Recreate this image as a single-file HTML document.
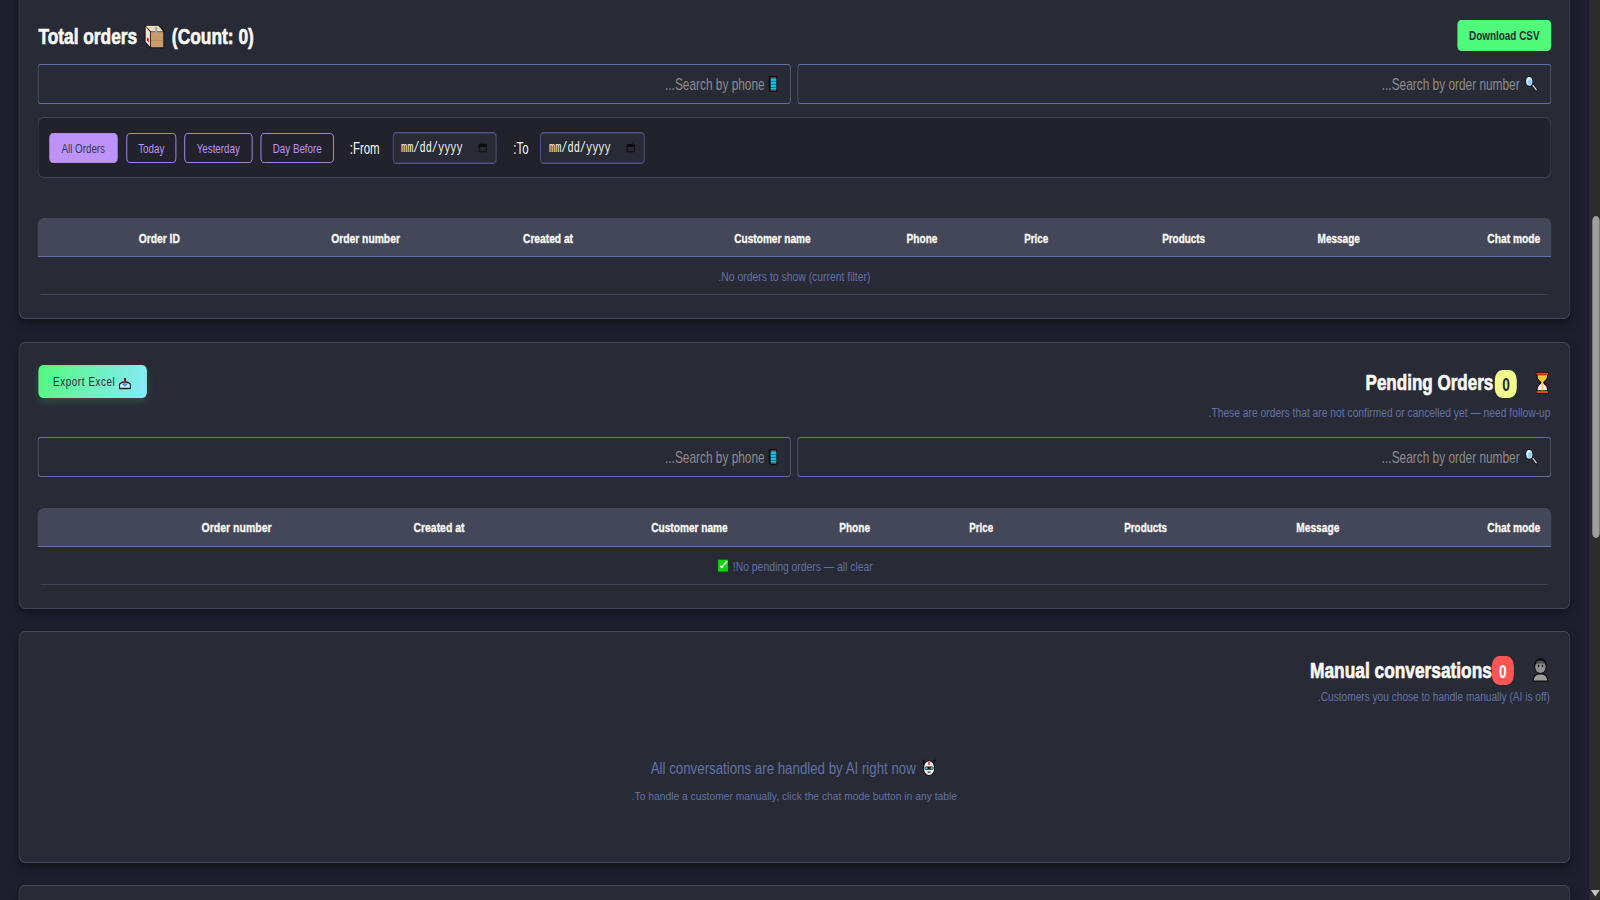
<!DOCTYPE html>
<html lang="en" dir="rtl">
<head>
<meta charset="utf-8">
<title>Orders dashboard</title>
<style>
html,body{margin:0;padding:0;overflow:hidden;}
body{width:1600px;height:900px;overflow:hidden;background:#1e1e2e;font-family:"Liberation Sans",Arial,sans-serif;color:#f8f8f2;}
#stage{position:absolute;left:0;top:0;width:2181.82px;height:900px;transform-origin:0 0;transform:scaleX(0.73333);direction:rtl;overflow:hidden;}
.card{position:absolute;box-sizing:border-box;margin:0;background:#282a36;border-radius:8.5px;box-shadow:inset 0 0 0 1px #44475a,0 5px 12px -3px rgba(0,0,0,.55);}
.t{position:absolute;display:block;margin:0;white-space:nowrap;line-height:20px;height:20px;direction:rtl;font-weight:400;}
.b{font-weight:700;-webkit-text-stroke:.35px currentColor;} .hd .b{-webkit-text-stroke:.65px currentColor;} .sb{font-weight:700;}
h2.hd{margin:0;font-size:22px;position:static;}
.ic{position:absolute;display:block;overflow:visible;}
button{position:absolute;box-sizing:border-box;margin:0;padding:0;border:0;font-family:inherit;cursor:pointer;}
.btn-green{background:#50fa7b;border-radius:5px;color:#282a36;}
.btn-grad{background:linear-gradient(120deg,#50fa7b 0%,#8be9fd 100%);border-radius:6px;color:#282a36;box-shadow:0 4px 10px rgba(80,250,123,.18);font-size:13.33px;}
.bl{position:absolute;line-height:20px;white-space:nowrap;direction:ltr;letter-spacing:.85px;}
.srch{position:absolute;box-sizing:border-box;box-shadow:inset 0 0 0 1px #6272a4;border-radius:4px;background:#282a36;}
.srch input{position:absolute;left:0;top:0;width:100%;height:100%;box-sizing:border-box;margin:0;border:0;outline:0;background:transparent;color:#f8f8f2;font:16.2px "Liberation Sans",Arial,sans-serif;direction:rtl;padding-left:12px;}
.srch input::placeholder{color:#8d8d8d;opacity:1;}
.fbar{position:absolute;box-sizing:border-box;background:#21222c;box-shadow:inset 0 0 0 1px #414355;border-radius:8px;}
.fbtn{background:transparent;border:1.5px solid #bd93f9;border-radius:5px;color:#bd93f9;font-size:13.33px;line-height:27px;text-align:center;}
.fbtn.on{background:#bd93f9;color:#3a3550;}
.lbl{position:absolute;font-size:15.6px;line-height:20px;white-space:nowrap;color:#f8f8f2;direction:rtl;}
.date{position:absolute;box-sizing:border-box;background:#282a36;box-shadow:inset 0 0 0 1.4px #4d5588;border-radius:5px;}
.mono{position:absolute;left:12px;top:7px;font:14px/18px "Liberation Mono","Courier New",monospace;color:#f8f8f2;direction:ltr;white-space:nowrap;}
.tbl{position:absolute;}
.thead{position:absolute;left:0;right:0;top:0;background:#44475a;border-bottom:1.5px solid #6272a4;border-radius:8px 8px 0 0;}
.th{position:static;}
.trow{position:absolute;left:4px;right:5px;border-bottom:1px solid #414458;}
.badge{position:absolute;border-radius:10px;}
.badge.y{background:#f1fa8c;} .badge.r{background:#ff5555;}
.bt{position:absolute;left:0;right:0;top:50%;margin-top:-8.6px;text-align:center;font:700 18px/20px "Liberation Sans",Arial,sans-serif;transform:scaleX(1.04);}
.sbar{position:absolute;background:#2c2c2c;direction:ltr;}
.thumb{position:absolute;background:#9f9f9f;border-radius:5px;}
</style>
</head>
<body>
<div id="stage">
<main>
<section class="card " style="left:24.55px;top:-24.0px;width:2116.36px;height:343.0px;"><h2 class="hd"><span id="t_total" class="t b" style="font-size:21.2px;top:51.2px;left:27.55px;width:1000px;text-align:left;transform-origin:0 50%;transform:scaleX(1.1146);">Total orders</span><svg class="ic" style="left:172.09px;top:49.0px;width:26.59px;height:23.2px;" viewBox="0 0 20 24" preserveAspectRatio="none"><path d="M0 0 H14.5 L20 6 V24 H5.7 L0 17.7 Z" fill="#0b0a09"/><path d="M6.3 7.3 H19.1 V23.1 H6.3 Z" fill="#c99b6c"/><path d="M6.3 15.6 H19.1 V16.4 H6.3 Z" fill="#b08356"/><path d="M0.9 0.9 H14.1 L19.1 6.6 H6.3 Z" fill="#f1dcc0"/><path d="M0.9 1.6 L5.5 7.3 V22.5 L0.9 17.3 Z" fill="#f4e3cf"/><path d="M10.4 2.2 H12.6 L13.4 8.8 H11.2 Z" fill="#9aa6b3"/><path d="M2.2 12.4 L4.3 14.6 V18 L2.2 15.8 Z" fill="#ee1c2e"/></svg><span id="t_count" class="t b" style="font-size:21.2px;top:51.2px;left:209.32px;width:1000px;text-align:left;transform-origin:0 50%;transform:scaleX(1.1177);">(Count: 0)</span></h2><button class="btn-green" style="left:1962.27px;top:44.0px;width:128.18px;height:31.0px;"><span id="t_csv" class="t sb" style="font-size:12.7px;top:5.8px;left:-436.25px;width:1000px;text-align:center;transform-origin:50% 50%;transform:scaleX(1.0654);color:#282a36;">Download CSV</span></button><div class="srch" style="left:1062.27px;top:88.0px;width:1028.05px;height:40.0px;"><input type="text" placeholder="Search by order number..." style="padding-right:42.95px"><svg class="ic" style="left:991.77px;top:12.2px;width:17.05px;height:15.0px;" viewBox="0 0 17 15" preserveAspectRatio="none"><path d="M10.6 9.1 L15.6 13.8" stroke="#0d1116" stroke-width="3.6" stroke-linecap="round"/><path d="M11 9.5 L15.4 13.6" stroke="#cfd8d2" stroke-width="1.7" stroke-linecap="round"/><circle cx="6" cy="5.4" r="5.3" fill="#0d1116"/><circle cx="6" cy="5.4" r="4.3" fill="#bfe6fb"/><circle cx="6.6" cy="6" r="2.6" fill="#8fd0f7"/><path d="M3 5 A3.2 3.2 0 0 1 6 2.2" stroke="#fff" stroke-width="1.3" fill="none" stroke-linecap="round"/></svg></div><div class="srch" style="left:26.59px;top:88.0px;width:1026.82px;height:40.0px;"><input type="text" placeholder="Search by phone..." style="padding-right:35.59px"><svg class="ic" style="left:997.09px;top:12.0px;width:11.32px;height:15.8px;" viewBox="0 0 11.4 15.8" preserveAspectRatio="none"><rect x="0" y="0" width="11.4" height="15.8" rx="1.6" fill="#0c0a0a"/><rect x="2.6" y="2.3" width="7.7" height="11.4" fill="#12c4ef"/><rect x="2.6" y="4.9" width="7.7" height="0.9" fill="#0a5f86"/><rect x="2.6" y="7.9" width="7.7" height="0.9" fill="#0a5f86"/><rect x="2.6" y="10.9" width="7.7" height="0.9" fill="#0a5f86"/><rect x="2.6" y="13.7" width="7.7" height="1" fill="#8a5a3a"/><rect x="2.6" y="1.3" width="7.7" height="1" fill="#8a5a3a"/></svg></div><div class="fbar" style="left:26.73px;top:141.0px;width:2063.73px;height:60.6px;"><button class="fbtn on" style="left:15.55px;top:16.0px;width:92.73px;height:30.0px;">All Orders</button><button class="fbtn" style="left:120.55px;top:16.0px;width:68.18px;height:30.0px;">Today</button><button class="fbtn" style="left:199.64px;top:16.0px;width:92.73px;height:30.0px;">Yesterday</button><button class="fbtn" style="left:303.27px;top:16.0px;width:100.91px;height:30.0px;">Day Before</button><label class="lbl" style="left:425.32px;top:21.5px;">From:</label><div class="date" style="left:483.27px;top:14.5px;width:142.50px;height:32.5px;"><span class="mono">mm/dd/yyyy</span><svg class="ic" style="left:117.27px;top:11.5px;width:11.59px;height:9.5px;" viewBox="0 0 14 14.5" preserveAspectRatio="none"><rect x="1" y="2.5" width="12" height="11" rx="1.6" fill="none" stroke="#0c0c0f" stroke-width="1.6"/><rect x="1" y="2.5" width="12" height="3.6" fill="#0c0c0f"/><rect x="3.4" y="0.6" width="1.7" height="3" fill="#0c0c0f"/><rect x="8.9" y="0.6" width="1.7" height="3" fill="#0c0c0f"/></svg></div><label class="lbl" style="left:648.27px;top:21.5px;">To:</label><div class="date" style="left:685.09px;top:14.5px;width:142.50px;height:32.5px;"><span class="mono">mm/dd/yyyy</span><svg class="ic" style="left:117.27px;top:11.5px;width:11.59px;height:9.5px;" viewBox="0 0 14 14.5" preserveAspectRatio="none"><rect x="1" y="2.5" width="12" height="11" rx="1.6" fill="none" stroke="#0c0c0f" stroke-width="1.6"/><rect x="1" y="2.5" width="12" height="3.6" fill="#0c0c0f"/><rect x="3.4" y="0.6" width="1.7" height="3" fill="#0c0c0f"/><rect x="8.9" y="0.6" width="1.7" height="3" fill="#0c0c0f"/></svg></div></div><div class="tbl" role="table" style="left:26.73px;top:242.0px;width:2063.73px;height:76.8px;"><div class="thead" role="row" style="height:37.5px"><div class="th" role="columnheader"><span id="t1_h0" class="t b" style="font-size:12.8px;top:11.0px;left:-805.82px;width:1000px;text-align:right;transform-origin:100% 50%;transform:scaleX(1.0999);">Order ID</span></div><div class="th" role="columnheader"><span id="t1_h1" class="t b" style="font-size:12.8px;top:11.0px;left:-506.50px;width:1000px;text-align:right;transform-origin:100% 50%;transform:scaleX(1.0993);">Order number</span></div><div class="th" role="columnheader"><span id="t1_h2" class="t b" style="font-size:12.8px;top:11.0px;left:-269.91px;width:1000px;text-align:right;transform-origin:100% 50%;transform:scaleX(1.0893);">Created at</span></div><div class="th" role="columnheader"><span id="t1_h3" class="t b" style="font-size:12.8px;top:11.0px;left:53.27px;width:1000px;text-align:right;transform-origin:100% 50%;transform:scaleX(1.0758);">Customer name</span></div><div class="th" role="columnheader"><span id="t1_h4" class="t b" style="font-size:12.8px;top:11.0px;left:227.14px;width:1000px;text-align:right;transform-origin:100% 50%;transform:scaleX(1.0774);">Phone</span></div><div class="th" role="columnheader"><span id="t1_h5" class="t b" style="font-size:12.8px;top:11.0px;left:378.23px;width:1000px;text-align:right;transform-origin:100% 50%;transform:scaleX(1.0452);">Price</span></div><div class="th" role="columnheader"><span id="t1_h6" class="t b" style="font-size:12.8px;top:11.0px;left:591.91px;width:1000px;text-align:right;transform-origin:100% 50%;transform:scaleX(1.0571);">Products</span></div><div class="th" role="columnheader"><span id="t1_h7" class="t b" style="font-size:12.8px;top:11.0px;left:802.59px;width:1000px;text-align:right;transform-origin:100% 50%;transform:scaleX(1.0670);">Message</span></div><div class="th" role="columnheader"><span id="t1_h8" class="t b" style="font-size:12.8px;top:11.0px;left:1048.73px;width:1000px;text-align:right;transform-origin:100% 50%;transform:scaleX(1.0930);">Chat mode</span></div></div><div class="trow" role="row" style="top:39px;height:36.80000000000001px;"><span id="t_empty1" class="t " style="font-size:12px;top:9.7px;left:527.45px;width:1000px;text-align:center;transform-origin:50% 50%;transform:scaleX(1.1817);color:#6272a4;">No orders to show (current filter).</span></div></div></section>
<section class="card " style="left:24.55px;top:342.0px;width:2116.36px;height:267.0px;"><button class="btn-grad" style="left:27.27px;top:23.0px;width:148.64px;height:33.0px;"><span class="bl" style="left:20.18px;top:6.699999999999989px;">Export Excel</span><svg class="ic" style="left:110.45px;top:12.9px;width:16.09px;height:11.2px;" viewBox="0 0 16 11.2" preserveAspectRatio="none"><rect x="6.9" y="0" width="2.4" height="4.6" fill="#5c0a14"/><path d="M0.7 10.5 V6.2 L4.6 4.2 H11.4 L15.3 6.2 V10.5 Z" fill="#dbeafb" stroke="#15222c" stroke-width="1.4" stroke-linejoin="round"/><path d="M3.4 5.6 H12.6 L8 8.8 Z" fill="#3a92e4"/><path d="M5.7 3.4 H10.5 L8.1 6 Z" fill="#f2142c"/></svg></button><h2 class="hd"><svg class="ic" style="left:2069.18px;top:30.3px;width:17.59px;height:21.7px;" viewBox="0 0 18 22" preserveAspectRatio="none"><path d="M0 0 H18 V3.4 H17 C17.3 9 12.3 9 12.2 11 C12.3 13 17.3 13 17 18.6 H18 V22 H0 V18.6 H1 C0.7 13 5.7 13 5.8 11 C5.7 9 0.7 9 1 3.4 H0 Z" fill="#0a0908"/><rect x="0.9" y="0.8" width="16.2" height="2" rx=".5" fill="#f0401c"/><rect x="0.9" y="19.2" width="16.2" height="2" rx=".5" fill="#f0401c"/><path d="M2.4 3.4 H15.6 C15.9 8.4 10.8 8.6 10.3 11 H7.7 C7.2 8.6 2.1 8.4 2.4 3.4 Z" fill="#f8c832"/><path d="M7.7 11 H10.3 C10.8 13.4 15.9 13.6 15.6 18.6 H2.4 C2.1 13.6 7.2 13.4 7.7 11 Z" fill="#f5f1f6"/><rect x="8.2" y="10.6" width="1.6" height="8" fill="#f8c832"/></svg><span id="t_pend" class="t b" style="font-size:21.2px;top:31.4px;left:1011.36px;width:1000px;text-align:right;transform-origin:100% 50%;transform:scaleX(1.0965);">Pending Orders</span><span class="badge y" style="left:2013.14px;top:27.8px;width:30.82px;height:28.0px;"><span class="bt" style="color:#282a36">0</span></span></h2><p id="t_pend_sub" class="t " style="font-size:12.5px;top:60.5px;left:1089.09px;width:1000px;text-align:right;transform-origin:100% 50%;transform:scaleX(1.1224);color:#6272a4;">These are orders that are not confirmed or cancelled yet — need follow-up.</p><div class="srch" style="left:1062.27px;top:95.0px;width:1028.05px;height:40.0px;"><input type="text" placeholder="Search by order number..." style="padding-right:42.95px"><svg class="ic" style="left:991.77px;top:12.2px;width:17.05px;height:15.0px;" viewBox="0 0 17 15" preserveAspectRatio="none"><path d="M10.6 9.1 L15.6 13.8" stroke="#0d1116" stroke-width="3.6" stroke-linecap="round"/><path d="M11 9.5 L15.4 13.6" stroke="#cfd8d2" stroke-width="1.7" stroke-linecap="round"/><circle cx="6" cy="5.4" r="5.3" fill="#0d1116"/><circle cx="6" cy="5.4" r="4.3" fill="#bfe6fb"/><circle cx="6.6" cy="6" r="2.6" fill="#8fd0f7"/><path d="M3 5 A3.2 3.2 0 0 1 6 2.2" stroke="#fff" stroke-width="1.3" fill="none" stroke-linecap="round"/></svg></div><div class="srch" style="left:26.59px;top:95.0px;width:1026.82px;height:40.0px;"><input type="text" placeholder="Search by phone..." style="padding-right:35.59px"><svg class="ic" style="left:997.09px;top:12.0px;width:11.32px;height:15.8px;" viewBox="0 0 11.4 15.8" preserveAspectRatio="none"><rect x="0" y="0" width="11.4" height="15.8" rx="1.6" fill="#0c0a0a"/><rect x="2.6" y="2.3" width="7.7" height="11.4" fill="#12c4ef"/><rect x="2.6" y="4.9" width="7.7" height="0.9" fill="#0a5f86"/><rect x="2.6" y="7.9" width="7.7" height="0.9" fill="#0a5f86"/><rect x="2.6" y="10.9" width="7.7" height="0.9" fill="#0a5f86"/><rect x="2.6" y="13.7" width="7.7" height="1" fill="#8a5a3a"/><rect x="2.6" y="1.3" width="7.7" height="1" fill="#8a5a3a"/></svg></div><div class="tbl" role="table" style="left:26.73px;top:166.0px;width:2063.73px;height:76.8px;"><div class="thead" role="row" style="height:37.5px"><div class="th" role="columnheader"><span id="t2_h0" class="t b" style="font-size:12.8px;top:9.7px;left:-681.73px;width:1000px;text-align:right;transform-origin:100% 50%;transform:scaleX(1.1185);">Order number</span></div><div class="th" role="columnheader"><span id="t2_h1" class="t b" style="font-size:12.8px;top:9.7px;left:-418.55px;width:1000px;text-align:right;transform-origin:100% 50%;transform:scaleX(1.1111);">Created at</span></div><div class="th" role="columnheader"><span id="t2_h2" class="t b" style="font-size:12.8px;top:9.7px;left:-58.95px;width:1000px;text-align:right;transform-origin:100% 50%;transform:scaleX(1.0786);">Customer name</span></div><div class="th" role="columnheader"><span id="t2_h3" class="t b" style="font-size:12.8px;top:9.7px;left:134.41px;width:1000px;text-align:right;transform-origin:100% 50%;transform:scaleX(1.0739);">Phone</span></div><div class="th" role="columnheader"><span id="t2_h4" class="t b" style="font-size:12.8px;top:9.7px;left:302.55px;width:1000px;text-align:right;transform-origin:100% 50%;transform:scaleX(1.0452);">Price</span></div><div class="th" role="columnheader"><span id="t2_h5" class="t b" style="font-size:12.8px;top:9.7px;left:539.82px;width:1000px;text-align:right;transform-origin:100% 50%;transform:scaleX(1.0522);">Products</span></div><div class="th" role="columnheader"><span id="t2_h6" class="t b" style="font-size:12.8px;top:9.7px;left:774.64px;width:1000px;text-align:right;transform-origin:100% 50%;transform:scaleX(1.0846);">Message</span></div><div class="th" role="columnheader"><span id="t2_h7" class="t b" style="font-size:12.8px;top:9.7px;left:1048.73px;width:1000px;text-align:right;transform-origin:100% 50%;transform:scaleX(1.0930);">Chat mode</span></div></div><div class="trow" role="row" style="top:39px;height:36.799999999999955px;"><svg class="ic" style="left:922.73px;top:12.3px;width:15.27px;height:13.4px;" viewBox="0 0 15.3 13.4" preserveAspectRatio="none"><rect x="0" y="0" width="15.3" height="13.4" rx="1.2" fill="#064d08"/><rect x="0.9" y="0.8" width="13.5" height="11.8" rx=".6" fill="#10d412"/><path d="M4.2 7.2 L5.9 8.4 L12.7 2.5" stroke="#fff" stroke-width="1.7" fill="none" stroke-linecap="round" stroke-linejoin="round"/></svg><span id="t_empty2" class="t " style="font-size:12px;top:9.5px;left:943.73px;width:1000px;text-align:left;transform-origin:0 50%;transform:scaleX(1.1769);color:#6272a4;">No pending orders — all clear!</span></div></div></section>
<section class="card " style="left:24.55px;top:631.0px;width:2116.36px;height:232.0px;"><h2 class="hd"><svg class="ic" style="left:2064.82px;top:26.9px;width:22.36px;height:23.8px;" viewBox="0 0 22.4 23.8" preserveAspectRatio="none"><ellipse cx="11.2" cy="7.8" rx="8.8" ry="7.8" fill="#0e0e0e"/><path d="M0.4 23.8 C0.4 18 4 15 11.2 15 C18.4 15 22 18 22 23.8 Z" fill="#0e0e0e"/><path d="M2 22.6 C2.4 18.4 5.4 16.4 11.2 16.4 C17 16.4 20 18.4 20.4 22.6 Z" fill="#9c9c9c"/><ellipse cx="11.2" cy="9" rx="7.2" ry="5.9" fill="#8f8f8f"/><path d="M4.6 6.6 C5.6 3.4 8 2.6 11.2 2.6 C14.4 2.6 16.8 3.4 17.8 6.6 C15 5 7.4 5 4.6 6.6 Z" fill="#4e4e4e"/><ellipse cx="8.7" cy="7.9" rx="0.9" ry="1.3" fill="#111"/><ellipse cx="14" cy="7.9" rx="0.9" ry="1.3" fill="#111"/></svg><span id="t_man" class="t b" style="font-size:21.2px;top:29.5px;left:1009.18px;width:1000px;text-align:right;transform-origin:100% 50%;transform:scaleX(1.1140);">Manual conversations</span><span class="badge r" style="left:2009.86px;top:25.1px;width:30.00px;height:28.9px;"><span class="bt" style="color:#fff">0</span></span></h2><p id="t_man_sub" class="t " style="font-size:12.5px;top:55.5px;left:1088.55px;width:1000px;text-align:right;transform-origin:100% 50%;transform:scaleX(1.1056);color:#6272a4;">Customers you chose to handle manually (AI is off).</p><p id="t_ai" class="t " style="font-size:16.5px;top:126.9px;left:862.36px;width:1000px;text-align:left;transform-origin:0 50%;transform:scaleX(1.0979);color:#6272a4;">All conversations are handled by AI right now</p><svg class="ic" style="left:1232.32px;top:128.4px;width:19.09px;height:17.1px;" viewBox="0 0 19 17.2" preserveAspectRatio="none"><path d="M0.2 0 L4 1.5 L3 8 Z M18.8 0 L15 1.5 L16 8 Z" fill="#101418"/><ellipse cx="9.5" cy="9.2" rx="8" ry="8" fill="#11161a"/><ellipse cx="9.5" cy="9.2" rx="6.9" ry="7" fill="#f4f2f3"/><rect x="8.5" y="2.7" width="2" height="3.6" rx="1" fill="#f4160a"/><rect x="3.3" y="7.5" width="12.4" height="3.4" rx="1.6" fill="#081416"/><ellipse cx="5.8" cy="9.2" rx="1.6" ry="1.2" fill="#25cfc6"/><ellipse cx="13.2" cy="9.2" rx="1.6" ry="1.2" fill="#25cfc6"/><rect x="7.4" y="12.7" width="4.2" height="1.2" rx=".5" fill="#2c2c2c"/></svg><p id="t_ai_sub" class="t " style="font-size:11.7px;top:155.0px;left:836.86px;width:1000px;text-align:left;transform-origin:0 50%;transform:scaleX(1.2007);color:#6272a4;">To handle a customer manually, click the chat mode button in any table.</p></section>
<section class="card " style="left:24.55px;top:885.0px;width:2116.36px;height:55.0px;"></section>
</main>
<div class="sbar" style="left:2166.82px;top:0.0px;width:15.00px;height:900.0px;"><div class="thumb" style="left:4.09px;top:216.0px;width:9.82px;height:321.5px;"></div><svg class="ic" style="left:2.32px;top:889.5px;width:12.14px;height:6.5px;" viewBox="0 0 12 6.5" preserveAspectRatio="none"><path d="M0 0 H12 L6 6.5 Z" fill="#c2c2c2"/></svg></div>
</div>
</body>
</html>
